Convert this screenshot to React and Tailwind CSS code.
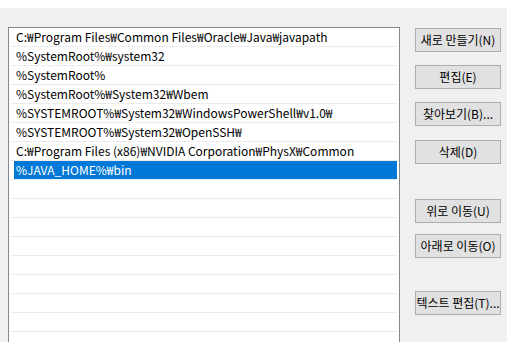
import React from 'react';

const paths = [
  'C:₩Program Files₩Common Files₩Oracle₩Java₩javapath',
  '%SystemRoot%₩system32',
  '%SystemRoot%',
  '%SystemRoot%₩System32₩Wbem',
  '%SYSTEMROOT%₩System32₩WindowsPowerShell₩v1.0₩',
  '%SYSTEMROOT%₩System32₩OpenSSH₩',
  'C:₩Program Files (x86)₩NVIDIA Corporation₩PhysX₩Common',
  '%JAVA_HOME%₩bin',
];

const buttons = [
  { label: '새로 만들기(N)', mt: 'mt-0' },
  { label: '편집(E)', mt: 'mt-[13px]' },
  { label: '찾아보기(B)...', mt: 'mt-[13px]' },
  { label: '삭제(D)', mt: 'mt-[14px]' },
  { label: '위로 이동(U)', mt: 'mt-[35px]' },
  { label: '아래로 이동(O)', mt: 'mt-[11px]' },
  { label: '텍스트 편집(T)...', mt: 'mt-[33px]' },
];

export default function App() {
  const selected = 7;
  const rows = [...paths, ...Array(10).fill('')];

  return (
    <div
      className="w-[507px] h-[342px] overflow-hidden bg-[#f0f0f0] text-[12px] text-black"
      style={{ fontFamily: '"Noto Sans CJK KR", "Noto Sans", sans-serif' }}
    >
      <div className="h-[8px] bg-white" />
      <div className="flex pt-[19px]">
        {/* 목록 */}
        <div className="ml-[8px] w-[392px] h-[330px] shrink-0 border border-[#828790] bg-white pl-[1px] pr-[2px]">
          {rows.map((p, i) => (
            <div key={i} className="h-[19px] border-b border-[#ececec] flex">
              <div
                className={
                  'h-[18px] flex items-center ml-[4px] flex-1 pl-[2px] leading-none whitespace-nowrap ' +
                  (i === selected ? 'bg-[#0078d7] text-white' : '')
                }
              >
                {p}
              </div>
            </div>
          ))}
        </div>

        {/* 버튼 */}
        <div className="ml-[15px] flex flex-col pt-[1px]">
          {buttons.map((b) => (
            <button
              key={b.label}
              className={`${b.mt} w-[86px] h-[24px] bg-[#e1e1e1] border border-[#adadad] flex items-center justify-center whitespace-nowrap leading-none`}
            >
              {b.label}
            </button>
          ))}
        </div>
      </div>
    </div>
  );
}
